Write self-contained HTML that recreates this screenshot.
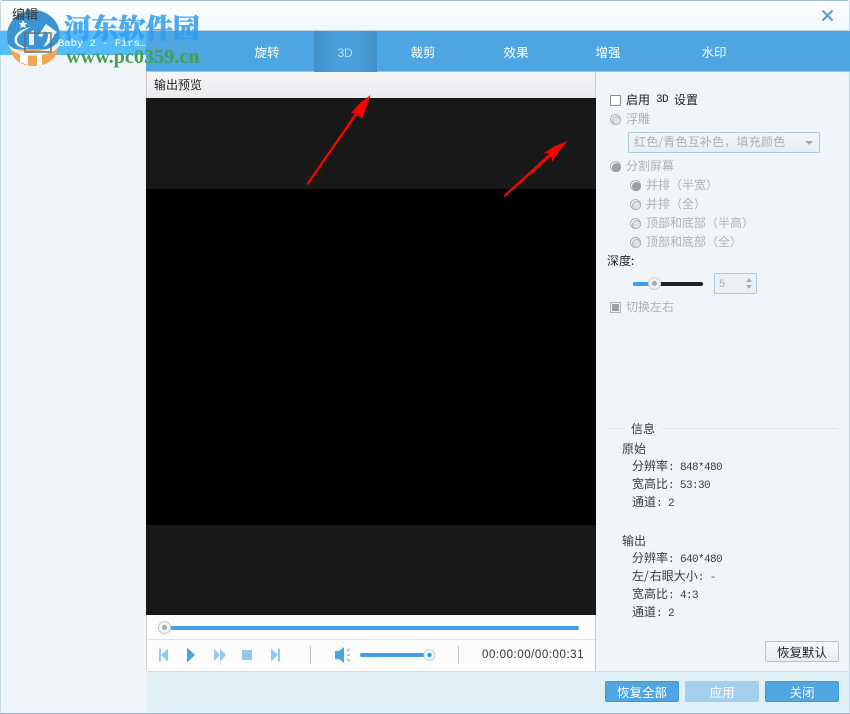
<!DOCTYPE html>
<html><head><meta charset="utf-8">
<style>
*{box-sizing:border-box}
html,body{margin:0;padding:0;width:850px;height:714px;overflow:hidden;background:#fff}
body{position:relative;font-family:"WenQuanYi Zen Hei","Noto Sans CJK SC","Liberation Sans",sans-serif;font-size:12px;color:#333}
.a{position:absolute;white-space:nowrap}
.l{font-family:"Liberation Mono",monospace;font-size:11px;letter-spacing:-.6px}
.tab{position:absolute;top:44px;color:#fff;font-size:12.5px;line-height:16px;transform:translateX(-50%)}
.g{color:#aeb2b4}
.info{color:#3c3c3c;line-height:18px}
.btn{position:absolute;top:681px;width:74px;height:21px;background:#4fa6e0;border:1px solid #3f97d8;border-radius:2px;color:#fff;text-align:center;line-height:19px;font-size:12.5px}
.rad{position:absolute;width:11px;height:11px;border:1px solid #aeb2b4;border-radius:50%;background:#f4f7f9}
.rad:after{content:"";position:absolute;left:1px;top:1px;width:7px;height:7px;border-radius:50%;background:#e0e3e5;border:1px solid #b4b8ba}
.rad.on:after{background:#9d9fa1;border-color:#9d9fa1}
</style></head><body>

<div class="a" style="left:0;top:0;width:850px;height:714px;background:#f0f5f9;border:1px solid #c4d6e0;border-top-color:#9fc0d2;border-radius:3px"></div>
<div class="a" style="left:1px;top:1px;width:848px;height:29px;background:linear-gradient(#fff,#f0f8fd)"></div>
<div class="a" style="left:0;top:30px;width:850px;height:1px;background:#c5d5df"></div>

<!-- left list panel selected row -->
<div class="a" style="left:0;top:31px;width:146px;height:24px;background:#55bcfb"></div>

<!-- tab bar -->
<div class="a" style="left:146px;top:31px;width:704px;height:41px;background:#4da6e1;border-bottom:1px solid #9cc7e4"></div>
<div class="a" style="left:314px;top:31px;width:63px;height:41px;background:linear-gradient(90deg,#3e8fc6,#499fd9 30%,#499fd9 70%,#3e8fc6)"></div>
<div class="tab" style="left:267px">旋转</div>
<div class="tab" style="left:345px;top:45px;color:#b4dcf6;font-size:12px;font-family:'Liberation Sans',sans-serif;letter-spacing:-.3px">3D</div>
<div class="tab" style="left:423px">裁剪</div>
<div class="tab" style="left:516px">效果</div>
<div class="tab" style="left:608px">增强</div>
<div class="tab" style="left:714px">水印</div>

<!-- preview header -->
<div class="a" style="left:146px;top:72px;width:450px;height:26px;background:linear-gradient(#f6f6f6,#e9ebee)"></div>
<div class="a" style="left:146px;top:72px;width:1px;height:26px;background:#c8c8c8"></div>
<div class="a" style="left:154px;top:77px;font-size:12px;line-height:16px;color:#222">输出预览</div>
<div class="a" style="left:595px;top:72px;width:1px;height:600px;background:#c4cdd3"></div>

<!-- video -->
<div class="a" style="left:146px;top:98px;width:450px;height:517px;background:#181818"></div>
<div class="a" style="left:146px;top:189px;width:450px;height:336px;background:#000"></div>

<!-- seek area -->
<div class="a" style="left:147px;top:615px;width:448px;height:56px;background:#fcfcfc"></div>
<div class="a" style="left:147px;top:639px;width:448px;height:1px;background:#e2e4e6"></div>
<div class="a" style="left:146px;top:615px;width:1px;height:56px;background:#d0d6da"></div>
<div class="a" style="left:165px;top:626px;width:414px;height:4px;background:#3f9fe8;border-radius:2px"></div>
<div class="a" style="left:158px;top:621px;width:13px;height:13px;border-radius:50%;background:#f4f4f4;border:1px solid #c8c8c8"></div>
<div class="a" style="left:162px;top:625px;width:5px;height:5px;border-radius:50%;background:#a8a8a8"></div>

<!-- transport -->
<svg class="a" style="left:146px;top:640px" width="450" height="31" viewBox="0 0 450 31">
<g fill="#93c8ef">
<path d="M13 8.500h2v13h-2zM15 15L22 8.500v13z"/>
<path d="M68 9l6 6-6 6zM74 8.500l6 6.500-6 6.500z"/>
<rect x="96" y="10" width="10" height="10"/>
<path d="M125 8.500l7 6.500-7 6.500zM132 8.500h2v13h-2z"/>
</g>
<path d="M41 7.500l8 7.500-8 7.500z" fill="#4aa3e4"/>
<rect x="164" y="6" width="1" height="18" fill="#c0c2c4"/>
<rect x="312" y="6" width="1" height="18" fill="#c0c2c4"/>
<path d="M189 11h4l5-4v16l-5-4h-4z" fill="#4aa3e4"/>
<path d="M201 11l3-2M201 15h3M201 19l3 2" stroke="#4aa3e4" stroke-width="1" fill="none"/>
<rect x="214" y="13" width="70" height="4" rx="2" fill="#3f9fe8"/>
<circle cx="283.500" cy="15" r="5.500" fill="#f4f8fb" stroke="#c6d4dd"/>
<circle cx="283.500" cy="15" r="2.200" fill="#2b9bf0"/>
</svg>
<div class="a" style="left:482px;top:647px;font-family:'Liberation Sans',sans-serif;font-size:11.500px;line-height:16px;color:#333;letter-spacing:.55px">00:00:00/00:00:31</div>

<!-- bottom bar -->
<div class="a" style="left:147px;top:671px;width:702px;height:1px;background:#d8dfe3"></div>
<div class="a" style="left:147px;top:672px;width:702px;height:41px;background:#e1f0f7"></div>
<div class="a" style="left:0;top:713px;width:850px;height:1px;background:#9fb9c6"></div>
<div class="btn" style="left:605px">恢复全部</div>
<div class="btn" style="left:685px;background:#a3cfec;border-color:#a3cfec">应用</div>
<div class="btn" style="left:765px">关闭</div>

<!-- close -->
<svg class="a" style="left:821px;top:9px" width="13" height="13"><path d="M1.500 1.500l10 10M11.500 1.500l-10 10" stroke="#4a9fd5" stroke-width="2"/></svg>

<!-- right panel -->
<div class="a" style="left:610px;top:95px;width:11px;height:11px;border:1px solid #8a8a8a;border-radius:1px;background:#fff"></div>
<div class="a" style="left:626px;top:92px;line-height:16px;color:#222">启用</div>
<div class="a l" style="left:656px;top:92px;line-height:16px;color:#222">3D</div>
<div class="a" style="left:674px;top:92px;line-height:16px;color:#222">设置</div>
<div class="rad" style="left:610px;top:114px"></div>
<div class="a g" style="left:626px;top:111px;line-height:16px">浮雕</div>
<div class="a" style="left:628px;top:132px;width:192px;height:21px;background:linear-gradient(#f2f6f8,#e6edf1);border:1px solid #a8cbe0;border-radius:2px"></div>
<div class="a g" style="left:634px;top:134px;line-height:16px;font-size:12px;letter-spacing:.2px">红色/青色互补色，填充颜色</div>
<div class="a" style="left:805px;top:141px;width:0;height:0;border-left:4px solid transparent;border-right:4px solid transparent;border-top:4px solid #a9adb0"></div>
<div class="rad on" style="left:610px;top:161px"></div>
<div class="a g" style="left:626px;top:158px;line-height:16px">分割屏幕</div>
<div class="rad on" style="left:630px;top:180px"></div>
<div class="a g" style="left:646px;top:177px;line-height:16px">并排（半宽）</div>
<div class="rad" style="left:630px;top:199px"></div>
<div class="a g" style="left:646px;top:196px;line-height:16px">并排（全）</div>
<div class="rad" style="left:630px;top:218px"></div>
<div class="a g" style="left:646px;top:215px;line-height:16px">顶部和底部（半高）</div>
<div class="rad" style="left:630px;top:237px"></div>
<div class="a g" style="left:646px;top:234px;line-height:16px">顶部和底部（全）</div>
<div class="a" style="left:607px;top:253px;line-height:16px;color:#222">深度:</div>
<div class="a" style="left:633px;top:282px;width:70px;height:4px;background:#222;border-radius:2px"></div>
<div class="a" style="left:633px;top:282px;width:20px;height:4px;background:#3f9fe8;border-radius:2px 0 0 2px"></div>
<div class="a" style="left:648px;top:277px;width:13px;height:13px;border-radius:50%;background:#eef1f3;border:1px solid #cfd4d7"></div>
<div class="a" style="left:652px;top:281px;width:5px;height:5px;border-radius:50%;background:#a8a8a8"></div>
<div class="a" style="left:714px;top:273px;width:43px;height:21px;background:#eaf0f4;border:1px solid #a8cbe0;border-radius:2px"></div>
<div class="a g" style="left:719px;top:276px;line-height:16px;font-size:11px;font-family:'Liberation Sans',sans-serif">5</div>
<div class="a" style="left:746px;top:278px;border-left:3px solid transparent;border-right:3px solid transparent;border-bottom:4px solid #a9adb0"></div>
<div class="a" style="left:746px;top:285px;border-left:3px solid transparent;border-right:3px solid transparent;border-top:4px solid #a9adb0"></div>
<div class="a" style="left:610px;top:302px;width:11px;height:11px;border:1px solid #b0b4b6;background:#f0f5f8"></div>
<div class="a" style="left:612px;top:304px;width:7px;height:7px;background:#9d9fa1"></div>
<div class="a g" style="left:626px;top:299px;line-height:16px">切换左右</div>

<!-- info -->
<div class="a" style="left:608px;top:428px;width:17px;height:1px;background:#dfe6ea"></div>
<div class="a" style="left:662px;top:428px;width:176px;height:1px;background:#dfe6ea"></div>
<div class="a info" style="left:631px;top:420px">信息</div>
<div class="a info" style="left:622px;top:440px">原始</div>
<div class="a info" style="left:632px;top:457px">分辨率<span class="l">: 848*480</span></div>
<div class="a info" style="left:632px;top:475px">宽高比<span class="l">: 53:30</span></div>
<div class="a info" style="left:632px;top:493px">通道<span class="l">: 2</span></div>
<div class="a info" style="left:622px;top:532px">输出</div>
<div class="a info" style="left:632px;top:549px">分辨率<span class="l">: 640*480</span></div>
<div class="a info" style="left:632px;top:567px">左<span style="letter-spacing:1px">/</span>右眼大小<span class="l">: -</span></div>
<div class="a info" style="left:632px;top:585px">宽高比<span class="l">: 4:3</span></div>
<div class="a info" style="left:632px;top:603px">通道<span class="l">: 2</span></div>
<div class="a" style="left:765px;top:641px;width:74px;height:21px;background:linear-gradient(#f7f9fa,#e8eef2);border:1px solid #b4c4cf;border-radius:2px;text-align:center;line-height:19px;font-size:12.500px;color:#222">恢复默认</div>

<!-- watermark logo -->
<svg class="a" style="left:0;top:0" width="70" height="72" viewBox="0 0 70 72">
<path d="M10 46c0 12 10 20 24 20s24-8 24-20z" fill="#f3a552"/>
<path d="M20 52h8v13l-8-3zM37 54h5v12h-5z" fill="#fff"/>
<path d="M7 36a26.500 26 0 0 1 53 0c0 6-2 10-5 13H12c-3-3-5-7-5-13z" fill="#3b94d0"/>
<path d="M7 42c5 13 44 14 53-3l-1 7c-7 12-42 13-49 2z" fill="#edf3f6"/>
<path d="M16 35c4-5 10-7 15-8-7 3-14 8-14 13 0 4 5 7 12 8-9 1-18-4-13-13z" fill="#fff"/>
<path d="M38 36l8-12 11 8-3 3c-2 6-6 10-11 12 4-5 5-9 5-13l-3-3-3 6z" fill="#fff" opacity=".92"/>
<path d="M34 30v15h-5V33z" fill="#fff" opacity=".9"/>
<path d="M23 20l1.300 2.800 3 .3-2.200 2 .6 3-2.700-1.500-2.700 1.500.6-3-2.200-2 3-.3z" fill="#fff" opacity=".9"/>
<rect x="25" y="33" width="26" height="19" fill="none" stroke="#5f6d78" stroke-width="2" opacity=".7"/>
</svg>
<div class="a" style="left:12px;top:6px;font-size:13px;line-height:16px;color:#333;z-index:3">编辑</div>
<div class="a" style="left:64px;top:11px;font-family:'Noto Serif CJK SC',serif;font-weight:900;-webkit-text-stroke:.5px #2f9df0;font-size:27.200px;line-height:32px;color:#2f9df0;opacity:.85">河东软件园</div>
<div class="a l" style="left:58px;top:38px;font-size:10.500px;letter-spacing:0;line-height:12px;color:#fff">Baby 2 - Firs…</div>
<div class="a" style="left:66px;top:46px;font-family:'Liberation Serif',serif;font-weight:700;font-size:20.200px;line-height:22px;color:#45a04f">www.pc0359.cn</div>

<!-- arrows -->
<svg class="a" style="left:0;top:0" width="850" height="714" viewBox="0 0 850 714">
<g fill="#f00" stroke="none">
<path d="M306.500 183.500L308 185L357 115L362 118.500L366 108L370.500 95L360 103L351 113L355 113.500z"/>
<path d="M503.500 195.500L505 197L552 155.500L552 162L558 153L567.500 141L555 146L544 153L549.500 153.500z"/>
</g>
</svg>
</body></html>
